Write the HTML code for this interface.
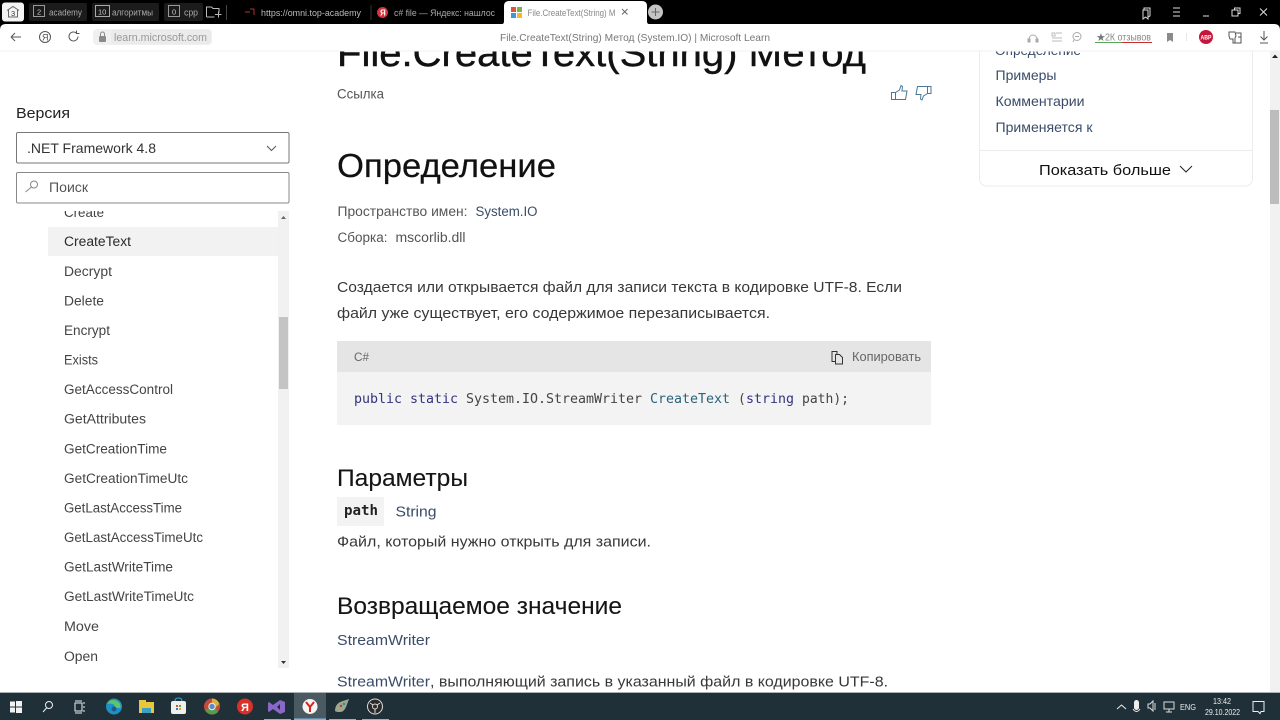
<!DOCTYPE html>
<html lang="ru"><head><meta charset="utf-8"><title>File.CreateText(String) Метод</title>
<style>
html,body{margin:0;padding:0;width:1280px;height:720px;overflow:hidden;background:#fff}
svg{display:block}
text{font-family:"Liberation Sans","DejaVu Sans",sans-serif;white-space:pre}
.m{font-family:"DejaVu Sans Mono","Liberation Mono",monospace}
.l{fill:#3a4c68}
.b{fill:#383838}
.i{fill:none;stroke:#555;stroke-width:1}
.w{fill:none;stroke:#bbb;stroke-width:1}
</style></head><body>
<svg width="1280" height="720" viewBox="0 0 1280 720" xmlns="http://www.w3.org/2000/svg">
<rect width="1280" height="720" fill="#fff"/>
<defs><clipPath id="list"><rect x="0" y="211" width="278" height="457"/></clipPath></defs>

<!-- main -->
<text x="337" y="66" font-size="38" fill="#111" stroke="#111" stroke-width=".4" textLength="529" lengthAdjust="spacingAndGlyphs">File.CreateText(String) Метод</text>
<text x="337" y="98.500" font-size="14" fill="#555" textLength="47" lengthAdjust="spacingAndGlyphs">Ссылка</text>
<g fill="none" stroke="#4a7896" stroke-width="1">
<path d="M891.500 92.500h4v7h-4zM895.500 92.500l4-2.500 1.500-4.500 1.500 1-.5 4.500h5l-1.500 8.500h-10"/>
<path d="M931 86.500h-3.500v7h3.500zM927.500 93.500l-4 2.500-1.500 4-1.500-1 .5-4.500h-5l1.500-8h10"/>
</g>
<text x="337" y="177" font-size="33" fill="#111" stroke="#111" stroke-width=".2" textLength="219" lengthAdjust="spacingAndGlyphs">Определение</text>
<text x="337.500" y="216" font-size="13.500" fill="#555" textLength="130" lengthAdjust="spacingAndGlyphs">Пространство имен:</text>
<text x="475.500" y="216" font-size="13.500" class="l" textLength="62" lengthAdjust="spacingAndGlyphs">System.IO</text>
<text x="337.500" y="242" font-size="13.500" fill="#555" textLength="50" lengthAdjust="spacingAndGlyphs">Сборка:</text>
<text x="395.500" y="242" font-size="13.500" fill="#555" textLength="70" lengthAdjust="spacingAndGlyphs">mscorlib.dll</text>
<text x="337" y="292" font-size="15" class="b" textLength="565" lengthAdjust="spacingAndGlyphs">Создается или открывается файл для записи текста в кодировке UTF-8. Если</text>
<text x="337" y="318" font-size="15" class="b" textLength="433" lengthAdjust="spacingAndGlyphs">файл уже существует, его содержимое перезаписывается.</text>

<rect x="337" y="341" width="594" height="84" fill="#f3f3f3"/>
<rect x="337" y="341" width="594" height="31" fill="#e5e5e5"/>
<text x="354" y="361" font-size="12" fill="#666" textLength="15" lengthAdjust="spacingAndGlyphs">C#</text>
<g fill="none" stroke="#333" stroke-width="1"><path d="M835.500 361.500h-3.500v-10h5v3M835.500 354.500h4l3 3v6.500h-7z"/></g>
<text x="852" y="361" font-size="12.500" fill="#666" textLength="69" lengthAdjust="spacingAndGlyphs">Копировать</text>
<text class="m" x="354" y="403" font-size="13" fill="#33337f" textLength="48" lengthAdjust="spacingAndGlyphs">public</text>
<text class="m" x="410" y="403" font-size="13" fill="#33337f" textLength="48" lengthAdjust="spacingAndGlyphs">static</text>
<text class="m" x="466" y="403" font-size="13" fill="#444" textLength="176" lengthAdjust="spacingAndGlyphs">System.IO.StreamWriter</text>
<text class="m" x="650" y="403" font-size="13" fill="#2a6478" textLength="80" lengthAdjust="spacingAndGlyphs">CreateText</text>
<text class="m" x="738" y="403" font-size="13" fill="#444">(</text>
<text class="m" x="746" y="403" font-size="13" fill="#33337f" textLength="48" lengthAdjust="spacingAndGlyphs">string</text>
<text class="m" x="802" y="403" font-size="13" fill="#444" textLength="47" lengthAdjust="spacingAndGlyphs">path);</text>

<text x="337" y="486" font-size="24" fill="#151515" stroke="#151515" stroke-width=".1" textLength="131" lengthAdjust="spacingAndGlyphs">Параметры</text>
<rect x="337" y="497" width="47" height="29" fill="#f3f3f3"/>
<text class="m" x="344" y="515" font-size="14" font-weight="700" fill="#222" textLength="34" lengthAdjust="spacingAndGlyphs">path</text>
<text x="395.500" y="516.500" font-size="15" class="l" textLength="41" lengthAdjust="spacingAndGlyphs">String</text>
<text x="337" y="546.500" font-size="15" class="b" textLength="314" lengthAdjust="spacingAndGlyphs">Файл, который нужно открыть для записи.</text>
<text x="337" y="614" font-size="24" fill="#151515" stroke="#151515" stroke-width=".1" textLength="285" lengthAdjust="spacingAndGlyphs">Возвращаемое значение</text>
<text x="337" y="645" font-size="15" class="l" textLength="93" lengthAdjust="spacingAndGlyphs">StreamWriter</text>
<text x="337" y="686.500" font-size="15" class="l" textLength="93" lengthAdjust="spacingAndGlyphs">StreamWriter</text>
<text x="430" y="686.500" font-size="15" class="b" textLength="458" lengthAdjust="spacingAndGlyphs">, выполняющий запись в указанный файл в кодировке UTF-8.</text>

<!-- left sidebar -->
<text x="16" y="118" font-size="15" fill="#222" textLength="54" lengthAdjust="spacingAndGlyphs">Версия</text>
<rect x="16.500" y="132.500" width="272.500" height="30.500" rx="1.500" fill="#fff" stroke="#777"/>
<text x="27" y="153" font-size="14" fill="#333" textLength="129" lengthAdjust="spacingAndGlyphs">.NET Framework 4.8</text>
<path d="M267 146l4.500 4.500 4.500-4.500" fill="none" stroke="#555" stroke-width="1"/>
<rect x="16.500" y="172.500" width="272.500" height="30.500" rx="1.500" fill="#fff" stroke="#888"/>
<circle cx="34" cy="184.500" r="3.500" fill="none" stroke="#888"/><path d="M31.500 187l-6 5" stroke="#888" fill="none"/>
<text x="49" y="192" font-size="14" fill="#555" textLength="39" lengthAdjust="spacingAndGlyphs">Поиск</text>
<rect x="278" y="211" width="11" height="457" fill="#f1f1f1"/>
<rect x="279" y="317" width="9" height="72" fill="#c4c4c4"/>
<path d="M281 219l2.500-3 2.500 3z" fill="#666"/><path d="M281 661l2.500 3 2.500-3z" fill="#333"/>
<rect x="48" y="227" width="230" height="29" fill="#f2f2f2"/>
<g clip-path="url(#list)" font-size="13.500" fill="#444">
<text x="64" y="217" textLength="40" lengthAdjust="spacingAndGlyphs">Create</text>
<text x="64" y="246" fill="#2a2a2a" textLength="67" lengthAdjust="spacingAndGlyphs">CreateText</text>
<text x="64" y="276" textLength="48" lengthAdjust="spacingAndGlyphs">Decrypt</text>
<text x="64" y="305.500" textLength="40" lengthAdjust="spacingAndGlyphs">Delete</text>
<text x="64" y="335" textLength="46" lengthAdjust="spacingAndGlyphs">Encrypt</text>
<text x="64" y="364.500" textLength="34" lengthAdjust="spacingAndGlyphs">Exists</text>
<text x="64" y="394" textLength="109" lengthAdjust="spacingAndGlyphs">GetAccessControl</text>
<text x="64" y="423.500" textLength="82" lengthAdjust="spacingAndGlyphs">GetAttributes</text>
<text x="64" y="453.500" textLength="103" lengthAdjust="spacingAndGlyphs">GetCreationTime</text>
<text x="64" y="483" textLength="124" lengthAdjust="spacingAndGlyphs">GetCreationTimeUtc</text>
<text x="64" y="512.500" textLength="118" lengthAdjust="spacingAndGlyphs">GetLastAccessTime</text>
<text x="64" y="542" textLength="139" lengthAdjust="spacingAndGlyphs">GetLastAccessTimeUtc</text>
<text x="64" y="571.500" textLength="109" lengthAdjust="spacingAndGlyphs">GetLastWriteTime</text>
<text x="64" y="601" textLength="130" lengthAdjust="spacingAndGlyphs">GetLastWriteTimeUtc</text>
<text x="64" y="631" textLength="35" lengthAdjust="spacingAndGlyphs">Move</text>
<text x="64" y="661" textLength="34" lengthAdjust="spacingAndGlyphs">Open</text>
</g>

<!-- right toc -->
<path d="M979.500 51v127q0 8 8 8h257q8 0 8-8V51" fill="#fff" stroke="#ececec"/>
<path d="M980 150.500h272" stroke="#ececec"/>
<text x="995" y="55" font-size="14" class="l" textLength="86" lengthAdjust="spacingAndGlyphs">Определение</text>
<text x="995.500" y="80" font-size="14" class="l" textLength="61" lengthAdjust="spacingAndGlyphs">Примеры</text>
<text x="995.500" y="106" font-size="14" class="l" textLength="89" lengthAdjust="spacingAndGlyphs">Комментарии</text>
<text x="995.500" y="132" font-size="14" class="l" textLength="97" lengthAdjust="spacingAndGlyphs">Применяется к</text>
<text x="1039" y="175" font-size="15" fill="#111" textLength="132" lengthAdjust="spacingAndGlyphs">Показать больше</text>
<path d="M1180 166l6 6 6-6" fill="none" stroke="#222" stroke-width="1"/>

<!-- page scrollbar -->
<rect x="1270" y="51" width="10" height="642" fill="#f1f1f1"/>
<rect x="1270" y="110" width="9" height="94" fill="#bcbcbc"/>
<path d="M1272 58l3-3.500 3 3.500z" fill="#222"/>

<!-- toolbar -->
<rect x="0" y="24" width="1280" height="27" fill="#fff"/>
<rect x="0" y="50.500" width="1280" height="1" fill="#f0f0f0"/>
<path d="M11 37h10M11 37l4-4M11 37l4 4" class="i"/>
<circle cx="45" cy="37" r="5.500" class="i"/>
<text x="42" y="40.500" font-size="9" fill="#555">Я</text>
<path d="M78 36.500a4.500 4.500 0 1 1-1.500-3.400M76.500 30.500v3h3" class="i"/>
<rect x="93" y="29" width="119" height="16" rx="4" fill="#f0f0f0"/>
<rect x="99" y="36" width="7" height="6" rx="1" fill="#8a8a8a"/><path d="M100.500 36v-2a2 2 0 0 1 4 0v2" fill="none" stroke="#8a8a8a"/>
<rect x="111" y="30" width="100" height="14" rx="2" fill="#ebebeb"/>
<text x="114" y="41" font-size="11" fill="#999" textLength="93" lengthAdjust="spacingAndGlyphs">learn.microsoft.com</text>
<text x="500" y="41" font-size="10.500" fill="#777" textLength="270" lengthAdjust="spacingAndGlyphs">File.CreateText(String) Метод (System.IO) | Microsoft Learn</text>
<path d="M1029 42v-3a4 4 0 0 1 8 0v3M1028 39h2v3h-2zM1036 39h2v3h-2z" fill="none" stroke="#aaa"/>
<path d="M1052 33h3v3h-3zM1056 33h6M1052 38h10M1052 41h10" fill="none" stroke="#bbb"/>
<circle cx="1077" cy="36.500" r="4" fill="none" stroke="#aaa"/><path d="M1074 40l-1 2" stroke="#aaa"/><path d="M1075 36.500h4" stroke="#aaa"/>
<text x="1096" y="41" font-size="11" fill="#777" textLength="8">★</text>
<text x="1105" y="40.500" font-size="10" fill="#888" textLength="46" lengthAdjust="spacingAndGlyphs">2К отзывов</text>
<rect x="1095" y="42" width="27" height="1" fill="#5aa85a"/>
<rect x="1122" y="42" width="30" height="1" fill="#c83030"/>
<path d="M1167 33h6v9l-3-2-3 2z" fill="#8a8a8a"/>
<path d="M1186.500 33v8" stroke="#e6e6e6"/>
<circle cx="1206" cy="37" r="7" fill="#c5173a"/>
<text x="1200.500" y="39.500" font-size="6.500" font-weight="700" fill="#fff" textLength="11" lengthAdjust="spacingAndGlyphs">ABP</text>
<path d="M1229 32h6l1 4-1 2v5h-2v-4h-3l-1-3zM1236 33h5v10h-6M1238 37h3" class="i"/>
<path d="M1264 31v9M1260.500 36.500l3.500 3.500 3.500-3.500M1260 43h8" class="i"/>

<!-- tab strip -->
<rect x="0" y="0" width="1280" height="24" fill="#000"/>
<path d="M0 24h6q-6 0-6 6zM1280 24h-6q6 0 6 6z" fill="#000"/>
<rect x="2" y="2.500" width="22" height="19" rx="3" fill="#f4f4f4"/>
<path d="M7 10.500l6-4 6 4M8.500 10v7h9v-7" fill="none" stroke="#666"/>
<text x="11" y="16" font-size="7.500" fill="#333">3</text>
<rect x="29" y="3" width="58" height="18" rx="2" fill="#1b1b1b"/>
<rect x="33.500" y="5.500" width="11" height="11" fill="none" stroke="#999"/>
<text x="37" y="14.500" font-size="7.500" fill="#ccc">2</text>
<text x="49" y="15.500" font-size="9" fill="#aaa" textLength="33" lengthAdjust="spacingAndGlyphs">academy</text>
<rect x="92" y="3" width="67" height="18" rx="2" fill="#1b1b1b"/>
<rect x="95.500" y="5.500" width="14" height="11" fill="none" stroke="#aaa"/>
<text x="98" y="14.500" font-size="7.500" fill="#ccc">10</text>
<text x="112" y="15.500" font-size="9" fill="#aaa" textLength="41" lengthAdjust="spacingAndGlyphs">алгоритмы</text>
<rect x="164" y="3" width="39" height="18" rx="2" fill="#1b1b1b"/>
<rect x="168.500" y="5.500" width="11" height="11" fill="none" stroke="#999"/>
<text x="172" y="14.500" font-size="7.500" fill="#ccc">0</text>
<text x="184" y="15.500" font-size="9" fill="#aaa" textLength="14" lengthAdjust="spacingAndGlyphs">cpp</text>
<path d="M206.500 17V7h5l1.500 1.500h6v4M206.500 17h8M215 14.500h6.500M218.500 11.500v6" class="w"/>
<path d="M226.500 5v15" stroke="#444"/>
<path d="M245 12h5M250 9h4v6" stroke="#a33" fill="none"/>
<text x="261" y="16" font-size="9.500" fill="#bbb" textLength="100" lengthAdjust="spacingAndGlyphs">https://omni.top-academy</text>
<path d="M371 5v15" stroke="#333"/>
<circle cx="382.500" cy="12.500" r="5.500" fill="#d9323a"/>
<text x="380" y="15.500" font-size="8" font-weight="700" fill="#fff">Я</text>
<text x="394" y="16" font-size="9.500" fill="#aaa" textLength="101" lengthAdjust="spacingAndGlyphs">c# file — Яндекс: нашлос</text>
<path d="M502 24q2 0 2-3V6q0-5 5-5h133q5 0 5 5v15q0 3 2 3z" fill="#fff"/>
<rect x="511" y="7" width="5" height="5" fill="#e0533a"/><rect x="517" y="7" width="5" height="5" fill="#7fb23a"/>
<rect x="511" y="13" width="5" height="5" fill="#3a9ad9"/><rect x="517" y="13" width="5" height="5" fill="#f2b630"/>
<text x="527.500" y="16" font-size="9.500" fill="#888" textLength="88" lengthAdjust="spacingAndGlyphs">File.CreateText(String) M</text>
<path d="M622 9l5.500 5.500M627.500 9L622 14.500" stroke="#666" fill="none"/>
<circle cx="655.500" cy="12" r="7.500" fill="#c4c4c4"/><path d="M651.500 12h8M655.500 8v8" stroke="#666" fill="none"/>
<path d="M1144 8h6v8l-2 1v-7h-4zM1143 10h5v9l-2.500-2-2.500 2z" fill="none" stroke="#ddd"/>
<path d="M1173 8h7M1173 12h7M1173 16h7" stroke="#ddd" fill="none"/>
<path d="M1203 16h6" stroke="#999" stroke-width="1.500" fill="none"/>
<path d="M1232 10h6v6h-6zM1234.500 10V8h5.500v5.500h-2" stroke="#ddd" fill="none"/>
<path d="M1260 8.500l7 7M1267 8.500l-7 7" stroke="#ddd" fill="none"/>

<!-- taskbar -->
<rect x="0" y="693" width="1280" height="27" fill="#1f3038"/>
<rect x="0" y="692" width="1280" height="1" fill="#aab2b5"/>
<g fill="#f2f2f2"><rect x="10" y="701.500" width="5" height="5"/><rect x="16" y="701" width="6" height="5.500"/><rect x="10" y="707.500" width="5" height="5"/><rect x="16" y="707.500" width="6" height="5.500"/></g>
<circle cx="49" cy="705" r="3.500" fill="none" stroke="#eee"/><path d="M46.500 708l-3.500 4" stroke="#eee" fill="none"/>
<path d="M75 703h7v8h-7zM84 702v2M84 706v2M84 710v2M75 701h7M75 713h7" stroke="#eee" fill="none"/>
<circle cx="114" cy="706.500" r="8" fill="#1f8fc4"/><path d="M107 704q4-6 10-3 4 2 3.500 7h-6q1-3-2-4-3-1-5.500 0z" fill="#5fc46a"/><circle cx="114" cy="709" r="2.500" fill="#1a5e8a"/>
<rect x="139" y="702" width="15" height="11" fill="#e8c83a"/><rect x="139" y="700" width="7" height="3" fill="#e8c83a"/><rect x="142" y="708" width="9" height="5" fill="#3aa0c8"/>
<rect x="171" y="701" width="15" height="13" rx="2" fill="#eef0ea"/><path d="M175 701q0-3 3.500-3t3.500 3" fill="none" stroke="#38a8d8"/>
<rect x="176" y="705" width="2" height="2" fill="#d05030"/><rect x="179" y="705" width="2" height="2" fill="#7a9a30"/><rect x="176" y="708" width="2" height="2" fill="#3080c0"/><rect x="179" y="708" width="2" height="2" fill="#d8a030"/>
<circle cx="212" cy="706.500" r="8" fill="#c84a3a"/><path d="M205 710a8 8 0 0 0 13 2l-4-6z" fill="#5a9a4a"/><path d="M212 698.500a8 8 0 0 1 7.500 5.500l-5 4-2.500-3z" fill="#d8b040"/><circle cx="212" cy="706.500" r="3.200" fill="#5a8ac8" stroke="#eee"/>
<circle cx="245" cy="706.500" r="8" fill="#d9302a"/><text x="241" y="711" font-size="11" font-weight="700" fill="#fff">Я</text>
<path d="M269 702l4 3 7-5 5 2v10l-5 2-7-5-4 3-1-1v-8zM280 704l-3 3 3 3z" fill="#8a68c8" fill-rule="evenodd"/>
<rect x="294" y="693" width="32" height="27" fill="#4b5a60"/>
<circle cx="310" cy="706.500" r="7.500" fill="#f4f4f4"/><path d="M306 702l4 5 4-5M310 707v5" stroke="#d22" stroke-width="2" fill="none"/>
<path d="M335 711q0-8 8-10l6-2-3 8q-2 5-6 5t-5-1z" fill="#9aa890"/><circle cx="341" cy="706" r="1.200" fill="#c33"/><circle cx="344" cy="704" r="1.200" fill="#38a"/>
<circle cx="375" cy="706.500" r="7.500" fill="#2a2a2a" stroke="#ddd"/><circle cx="375" cy="706.500" r="2.500" fill="none" stroke="#ddd"/><path d="M370 703l3 2M380 703l-3 2M375 713v-4" stroke="#ddd" fill="none"/>
<rect x="264" y="719" width="27" height="1" fill="#76b9ed"/><rect x="294" y="718.500" width="32" height="1.500" fill="#76b9ed"/><rect x="329" y="719" width="27" height="1" fill="#76b9ed"/><rect x="362" y="719" width="27" height="1" fill="#76b9ed"/>
<path d="M1117 709l4.500-4 4.500 4" stroke="#eee" fill="none"/>
<rect x="1134" y="700" width="5" height="10" rx="2.500" fill="#eee"/><path d="M1133 709q3.500 5 7 0" stroke="#eee" fill="none"/>
<path d="M1148 704h2l3-3v10l-3-3h-2zM1155 703v7" stroke="#ddd" fill="none"/>
<path d="M1164 702h10v7h-10zM1166 712h6M1169 709v3" stroke="#ddd" fill="none"/>
<text x="1180" y="710" font-size="8.500" fill="#eee" textLength="16" lengthAdjust="spacingAndGlyphs">ENG</text>
<text x="1213" y="704" font-size="8.500" fill="#eee" textLength="18" lengthAdjust="spacingAndGlyphs">13:42</text>
<text x="1205" y="715" font-size="8.500" fill="#eee" textLength="35" lengthAdjust="spacingAndGlyphs">29.10.2022</text>
<path d="M1253 701.500h11v10h-3l-1 2-2-2h-5z" stroke="#eee" fill="none"/>
</svg>
</body></html>
